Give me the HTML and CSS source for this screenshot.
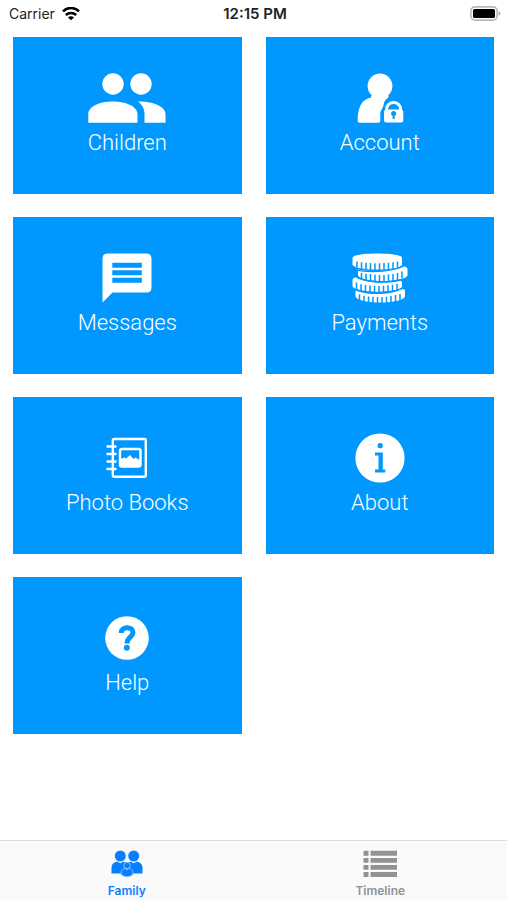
FILE: index.html
```html
<!DOCTYPE html>
<html lang="en">
<head>
<meta charset="utf-8">
<meta name="viewport" content="width=device-width, initial-scale=1">
<title>Family</title>
<link rel="stylesheet" href="styles.css">
</head>
<body>
<header class="status">
  <div class="carrier"><span>Carrier</span>
    <svg width="18" height="14" viewBox="0 0 18 14" fill="none" stroke="#000" stroke-width="2.5" aria-hidden="true">
      <path d="M1 4.400C5.400-.2 12.600-.2 17 4.400M3.800 8C6.800 5.200 11.200 5.200 14.200 8"/>
      <path d="M9 13.200L6 10.400C7.700 8.800 10.300 8.800 12 10.400z" fill="#000" stroke="none"/>
    </svg>
  </div>
  <div class="time">12:15 PM</div>
  <div class="battery">
    <svg width="31" height="15" viewBox="0 0 31 15" aria-hidden="true">
      <rect x=".9" y=".9" width="26.2" height="13.2" rx="4" fill="#fff" stroke="#b9b9b9" stroke-width="1.6"/>
      <rect x="3" y="3" width="22" height="9" rx="1.5" fill="#000"/>
      <path d="M28.5 5.2q2 .8 2 2.3t-2 2.3z" fill="#aaa"/>
    </svg>
  </div>
</header>

<main class="tiles">
  <a class="tile" href="#children">
    <svg width="80" height="50" viewBox="0 0 80 50" fill="#fff" aria-hidden="true">
      <circle cx="26" cy="11" r="10.7"/><circle cx="54" cy="11" r="10.7"/>
      <path d="M1.300 49.700V41C1.300 33 14 28.500 25.800 28.500S50.500 33 50.500 41v8.700zM57.500 49.700V41c0-5-2.500-9.200-6.500-12.400 13-.6 27.500 4.400 27.500 12.400v8.700z"/>
    </svg>
    <span>Children</span>
  </a>
  <a class="tile" href="#account">
    <svg width="50" height="50" viewBox="0 0 50 50" aria-hidden="true">
      <path fill="#fff" d="M16 22.500h18l-1 2.500c-3 1.500-4 4-4.500 7.500L26.500 37q-1.200 1-1.200 3v7.500q0 2.200-2 2.200H4.300q-1.600 0-1.600-1.700C2.700 37 5.500 26 16 24.700z"/>
      <circle cx="25" cy="13" r="12.400" fill="#fff"/>
      <path d="M31.700 38v-2.500a6.900 6 0 0 1 13.800 0V38" fill="none" stroke="#fff" stroke-width="3"/>
      <rect x="29" y="36.500" width="19.300" height="13" rx="2.500" fill="#fff"/>
      <circle cx="38.600" cy="40.500" r="2.500" fill="#0098ff"/>
      <path d="M37.600 41h2v5h-2z" fill="#0098ff"/>
    </svg>
    <span>Account</span>
  </a>
  <a class="tile" href="#messages">
    <svg width="50" height="50" viewBox="0 0 50 50" aria-hidden="true">
      <path fill="#fff" d="M5.500.500h39q5 0 5 5v29q0 5-5 5h-34l-10 10v-44q0-5 5-5z"/>
      <path fill="#0098ff" d="M10.300 9.800h29.500v5H10.300zM10.300 17.300h29.500v5H10.300zM10.300 24.700h29.500v5H10.300z"/>
    </svg>
    <span>Messages</span>
  </a>
  <a class="tile" href="#payments">
    <svg width="56" height="50" viewBox="0 0 56 50" aria-hidden="true">
      <g fill="#fff">
        <path d="M.500 5C.500 2 12 .500 25.200.500S50 2 50 5v6.500c0 3-12 5-24.800 5S.500 14.500.500 11.500z"/>
        <path d="M6 16.500C22 19.500 42 18 51.500 13.500q4 .5 4 2.500v6c0 3.500-12 6-24.500 6S6 25.500 6 22z"/>
        <path d="M.500 27c0-1.500 2-2.600 4-3 8 6 29 7.500 44 3.800l1.500.7v5c0 3-12 5.200-24.800 5.200S.500 36 .500 33z"/>
        <path d="M3.500 37.500c12 5 34 5 46-1.200h2.500q1 .5 1 1.700v5c0 4-11.500 6.500-24.500 6.500S3.500 47 3.500 43z"/>
      </g>
      <g fill="none" stroke="#0098ff" stroke-width="1.500">
        <path d="M5 8.500v6M9.500 9.300v7M14 9.800v7M18.500 10v7M23 10.300v7M27.500 10.300v7M32 10v7M36.500 9.800v7M41 9.300v7M45.500 8.500v6"/>
        <path d="M9.500 20v6M14 20.700v7M18.500 21v7M23 21.700v7M27.500 22v7M32 22v7M36.500 21.500v7M41 21v7M45.500 20v7M50 18.500v7"/>
        <path d="M4.500 29.500v7M9 31.200v7M13.500 32v7M18 32.500v7M22.500 33v7M27 33v7M31.500 32.700v7M36 32.300v7M40.500 31.700v7M45 30.700v7"/>
        <path d="M7.500 41.500v6M12 42.700v7M16.500 43.500v7M21 43.800v7M25.500 44v7M30 44v7M34.500 43.700v7M39 43v7M43.500 42v7M48 41v6"/>
        <path d="M6 17.300C22 20 42 18 51 13.300M3.500 23.500c8 6 30 7 46 3M3 36.500c12 4.500 34 4.500 47-1" stroke-width="1.200"/>
      </g>
    </svg>
    <span>Payments</span>
  </a>
  <a class="tile" href="#books">
    <svg width="42" height="50" viewBox="0 0 42 50" fill="none" stroke="#fff" stroke-width="2.400" stroke-linecap="round" aria-hidden="true">
      <rect x="6.800" y="6" width="33" height="37.800" rx="1.500"/>
      <path d="M1.500 13.500h8M1.500 21h8M1.500 28.500h8M1.500 36h8"/>
      <rect x="14" y="16" width="20.500" height="17.500" rx="2"/>
      <path d="M14 26.500l4-2 2 1 4-3.500 3.500 4 2-1.500 5 3v6H14z" fill="#fff" stroke="none"/>
    </svg>
    <span>Photo Books</span>
  </a>
  <a class="tile" href="#about">
    <svg width="50" height="50" viewBox="0 0 50 50" aria-hidden="true">
      <circle cx="25" cy="25" r="24.600" fill="#fff"/>
      <circle cx="25.200" cy="12.700" r="2.600" fill="#0098ff"/>
      <path d="M20 19.500h7.800v17h2.500v3H20v-3h3.500v-14H20z" fill="#0098ff"/>
    </svg>
    <span>About</span>
  </a>
  <a class="tile" href="#help">
    <svg width="50" height="50" viewBox="0 0 50 50" aria-hidden="true">
      <circle cx="25" cy="25" r="21.800" fill="#fff"/>
      <path d="M19.200 20C19.200 13 31 13 31 19.500C31 24 25 24 25 30.500" fill="none" stroke="#0098ff" stroke-width="5"/>
      <circle cx="24.800" cy="34.800" r="3" fill="#0098ff"/>
    </svg>
    <span>Help</span>
  </a>
</main>

<nav class="tabs">
  <a class="tab active" href="#family" aria-current="page">
    <svg width="32" height="28" viewBox="0 0 32 28" fill="currentColor" aria-hidden="true">
      <circle cx="9.300" cy="6" r="5.500"/><circle cx="22.700" cy="6" r="5.500"/>
      <path d="M.500 23.500V18c0-4 2.500-6.300 6-6.300l2.800 1.500 2.800-1.500q2.500 0 3.900 1.800 1.400-1.800 3.900-1.800l2.800 1.500 2.800-1.500c3.500 0 6 2.300 6 6.300v5.500z"/>
      <g stroke="#8cc5ff" stroke-width=".9">
        <path d="M10 24.500c0-4 1.500-6 4-6l2 1.500 2-1.500c2.500 0 4 2 4 6q-6 4.500-12 0z"/>
        <circle cx="16" cy="15.500" r="3.200"/>
      </g>
    </svg>
    <span>Family</span>
  </a>
  <a class="tab" href="#timeline">
    <svg width="34" height="28" viewBox="0 0 34 28" fill="currentColor" aria-hidden="true">
      <path d="M7.500.800H34v5H7.500zM7.500 8H34v4.800H7.500zM7.500 15H34v4.800H7.500zM7.500 22H34v5H7.500z"/>
      <path d="M.500.800h5v5h-5zM.500 8h5v4.800h-5zM.500 15h5v4.800h-5zM.500 22h5v5h-5z"/>
    </svg>
    <span>Timeline</span>
  </a>
</nav>
</body>
</html>
```
FILE: styles.css
```css
* {
  box-sizing: border-box;
}

body {
  margin: 0;
  min-height: 100vh;
  display: flex;
  flex-direction: column;
  background: #fff;
  font-family: Inter, "Liberation Sans", sans-serif;
}

a {
  color: inherit;
  text-decoration: none;
}

svg {
  display: block;
  flex: none;
}

.status {
  display: grid;
  grid-template-columns: 1fr auto 1fr;
  align-items: center;
  height: 27px;
  padding: 0 6px 0 9px;
  font-size: 14px;
  color: #222;
}

.carrier {
  display: flex;
  align-items: center;
  gap: 7px;
}

.time {
  font-size: 15px;
  font-weight: 600;
}

.battery {
  justify-self: end;
}

.tiles {
  flex: 1;
  display: grid;
  grid-template-columns: 1fr 1fr;
  align-content: start;
  gap: 23px 24px;
  padding: 10px 13px 24px;
}

.tile {
  display: flex;
  flex-direction: column;
  align-items: center;
  gap: 5px;
  padding: 36px 8px 37px;
  background: #0098ff;
  color: #fff;
  font: 300 22px/29px Roboto, sans-serif;
}

.tabs {
  display: flex;
  background: #fafafa;
  border-top: 1px solid #dcdcdc;
}

.tab {
  flex: 1;
  display: flex;
  flex-direction: column;
  align-items: center;
  gap: 5px;
  padding: 9px 0 1px;
  color: #929292;
  font-size: 12px;
  font-weight: 600;
  line-height: 16px;
}

.active {
  color: #087fff;
}
```
